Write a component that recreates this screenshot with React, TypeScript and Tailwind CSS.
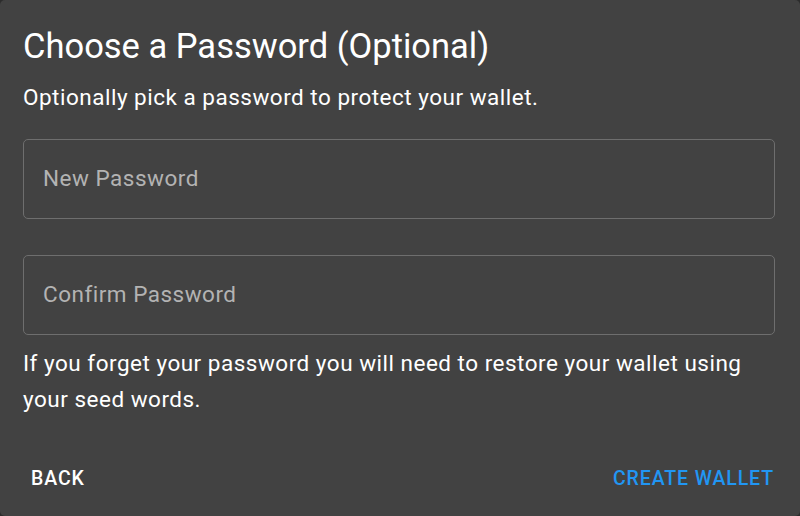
import { ReactElement } from "react";

function Field({ label }: { label: string }): ReactElement {
  return (
    <div className="h-[80px] w-full rounded-[5px] border border-[#6e6e6e] flex items-center px-[19px]">
      <span className="text-[22.5px] text-[#b3b3b3] tracking-[0.5px]">{label}</span>
    </div>
  );
}

export default function App(): ReactElement {
  return (
    <div className="w-[800px] h-[516px] bg-[#2c2c2c]" style={{ fontFamily: "Roboto, 'Noto Sans', sans-serif" }}>
      <div className="w-full h-full bg-[#424242] rounded-[5px] flex flex-col pl-[23px] pr-[25px] pt-[24px] text-white">
        {/* Title */}
        <h1 className="text-[34.5px] leading-[44px] font-normal">Choose a Password (Optional)</h1>
        <p className="mt-[14px] text-[22.5px] leading-[30px] tracking-[0.5px]">
          Optionally pick a password to protect your wallet.
        </p>
        {/* Inputs */}
        <div className="mt-[27px] flex flex-col gap-[36px]">
          <Field label="New Password" />
          <Field label="Confirm Password" />
        </div>
        <p className="mt-[10px] text-[22.5px] leading-[36px] tracking-[0.5px]">
          If you forget your password you will need to restore your wallet using your seed words.
        </p>
        {/* Actions */}
        <div className="mt-auto mb-[23px] flex justify-between items-center">
          <button className="ml-[8px] text-[19.5px] font-medium tracking-[0.9px] text-white">BACK</button>
          <button className="mr-[1px] text-[19.5px] font-medium tracking-[0.9px] text-[#2196f3]">CREATE WALLET</button>
        </div>
      </div>
    </div>
  );
}
